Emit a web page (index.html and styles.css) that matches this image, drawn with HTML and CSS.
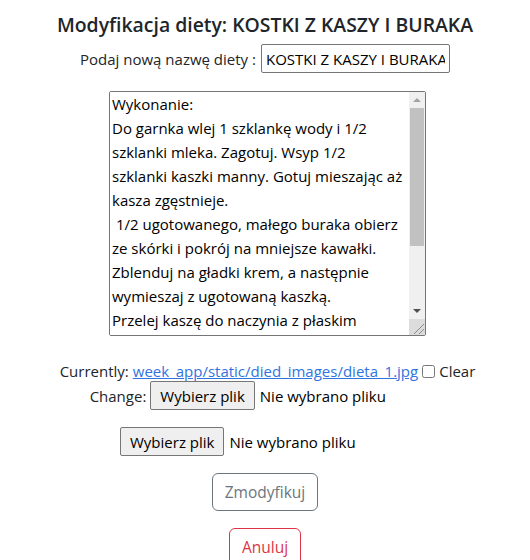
FILE: index.html
```html
<!DOCTYPE html>
<html lang="pl">
<head>
<meta charset="utf-8">
<title>Modyfikacja diety</title>
<link rel="stylesheet" href="styles.css">
</head>
<body>
<main class="page">
  <h4 class="title">Modyfikacja diety: KOSTKI Z KASZY I BURAKA</h4>
  <div class="name-row">
    <label class="name-label" for="name">Podaj nową nazwę diety :</label>
    <input class="name-input" id="name" type="text" value="KOSTKI Z KASZY I BURAKA">
  </div>
  <div class="recipe-box">
    <textarea class="recipe">Wykonanie:
Do garnka wlej 1 szklankę wody i 1/2
szklanki mleka. Zagotuj. Wsyp 1/2
szklanki kaszki manny. Gotuj mieszając aż
kasza zgęstnieje.
 1/2 ugotowanego, małego buraka obierz
ze skórki i pokrój na mniejsze kawałki.
Zblenduj na gładki krem, a następnie
wymieszaj z ugotowaną kaszką.
Przelej kaszę do naczynia z płaskim
dnem i odstaw do wystygnięcia.
Pokrój na kostki i podawaj.</textarea>
    <div class="scrollbar">
      <div class="sb-btn"><span class="arrow-up"></span></div>
      <div class="sb-thumb"></div>
      <div class="sb-track"></div>
      <div class="sb-btn"><span class="arrow-down"></span></div>
      <div class="sb-corner">
        <svg class="grip" width="16" height="16" viewBox="0 0 16 16">
          <path d="M5 15 L15 5 M10 15 L15 10" stroke="#8a8a8a" stroke-width="1" fill="none"/>
        </svg>
      </div>
    </div>
  </div>
  <div class="current-row">
    <span>Currently:</span>
    <a class="current-link" href="#">week_app/static/died_images/dieta_1.jpg</a>
    <label class="clear"><input type="checkbox" class="clear-box"> Clear</label>
  </div>
  <div class="change-row">
    <span class="change-label">Change:</span>
    <span class="file">
      <button class="file-btn" type="button">Wybierz plik</button>
      <span class="file-name">Nie wybrano pliku</span>
    </span>
  </div>
  <div class="file-row">
    <span class="file">
      <button class="file-btn" type="button">Wybierz plik</button>
      <span class="file-name">Nie wybrano pliku</span>
    </span>
  </div>
  <button class="btn btn-secondary" type="button">Zmodyfikuj</button>
  <button class="btn btn-danger" type="button">Anuluj</button>
</main>
</body>
</html>
```

FILE: styles.css
```css
* {
  box-sizing: border-box;
}

html, body {
  margin: 0;
  padding: 0;
  background: #fff;
}

body {
  font-family: "Open Sans", "Noto Sans", "Liberation Sans", sans-serif;
  font-size: 15px;
  line-height: 24px;
  color: #212529;
}

.page {
  display: flex;
  flex-direction: column;
  align-items: center;
  text-align: center;
  padding-top: 12px;
}

.title {
  margin: 0;
  font-size: 19.4px;
  line-height: 26px;
  font-weight: 600;
  color: #212529;
}

.name-row {
  margin-top: 6px;
  display: flex;
  align-items: center;
  gap: 5px;
}

.name-input {
  width: 189px;
  height: 29px;
  border: 1px solid #767676;
  border-radius: 2px;
  padding: 1px 4px;
  font-family: inherit;
  font-size: 15px;
  color: #000;
}

.recipe-box {
  margin-top: 18px;
  margin-left: 5px;
  width: 317px;
  height: 245px;
  border: 1px solid #767676;
  border-radius: 2px;
  display: flex;
  overflow: hidden;
}

.recipe {
  flex: 1;
  min-width: 0;
  height: 100%;
  border: none;
  outline: none;
  margin: 0;
  padding: 0 2px;
  font-family: inherit;
  font-size: 15px;
  line-height: 24px;
  color: #000;
  white-space: pre;
  overflow: hidden;
  resize: none;
  background: #fff;
}

.scrollbar {
  width: 16px;
  display: flex;
  flex-direction: column;
  background: #f0f0f0;
}

.sb-btn {
  height: 16px;
  display: flex;
  align-items: center;
  justify-content: center;
}

.arrow-up {
  width: 0;
  height: 0;
  border-left: 4px solid transparent;
  border-right: 4px solid transparent;
  border-bottom: 4px solid #a3a3a3;
}

.arrow-down {
  width: 0;
  height: 0;
  border-left: 4px solid transparent;
  border-right: 4px solid transparent;
  border-top: 4px solid #505050;
}

.sb-thumb {
  height: 138px;
  margin: 0 1px;
  background: #c1c1c1;
}

.sb-track {
  flex: 1;
}

.sb-corner {
  height: 16px;
  background: #dcdcdc;
}

.grip {
  display: block;
}

.current-row {
  margin-top: 23px;
  padding-left: 5px;
  display: flex;
  align-items: center;
  gap: 4px;
}

.current-link {
  color: #2f74e0;
  text-decoration: underline;
}

.clear {
  display: inline-flex;
  align-items: center;
  gap: 4px;
}

.clear-box {
  margin: 0;
  width: 13px;
  height: 13px;
}

.change-row {
  margin-top: -2px;
  display: flex;
  align-items: center;
  gap: 4px;
}

.file-row {
  margin-top: 17px;
  display: flex;
  align-items: center;
}

.file {
  width: 290px;
  display: inline-flex;
  align-items: center;
  gap: 5px;
  text-align: left;
}

.file-btn {
  height: 29px;
  padding: 0 9px;
  font-family: inherit;
  font-size: 15px;
  color: #000;
  background: #efefef;
  border: 1px solid #767676;
  border-radius: 2px;
}

.file-name {
  color: #000;
}

.btn {
  height: 38px;
  padding: 0 12px;
  font-family: inherit;
  font-size: 15.5px;
  background: transparent;
  border: 1px solid;
  border-radius: 6px;
}

.btn-secondary {
  margin-top: 17px;
  color: #6c757d;
  border-color: #6c757d;
}

.btn-danger {
  margin-top: 17px;
  color: #dc3545;
  border-color: #dc3545;
}
```
